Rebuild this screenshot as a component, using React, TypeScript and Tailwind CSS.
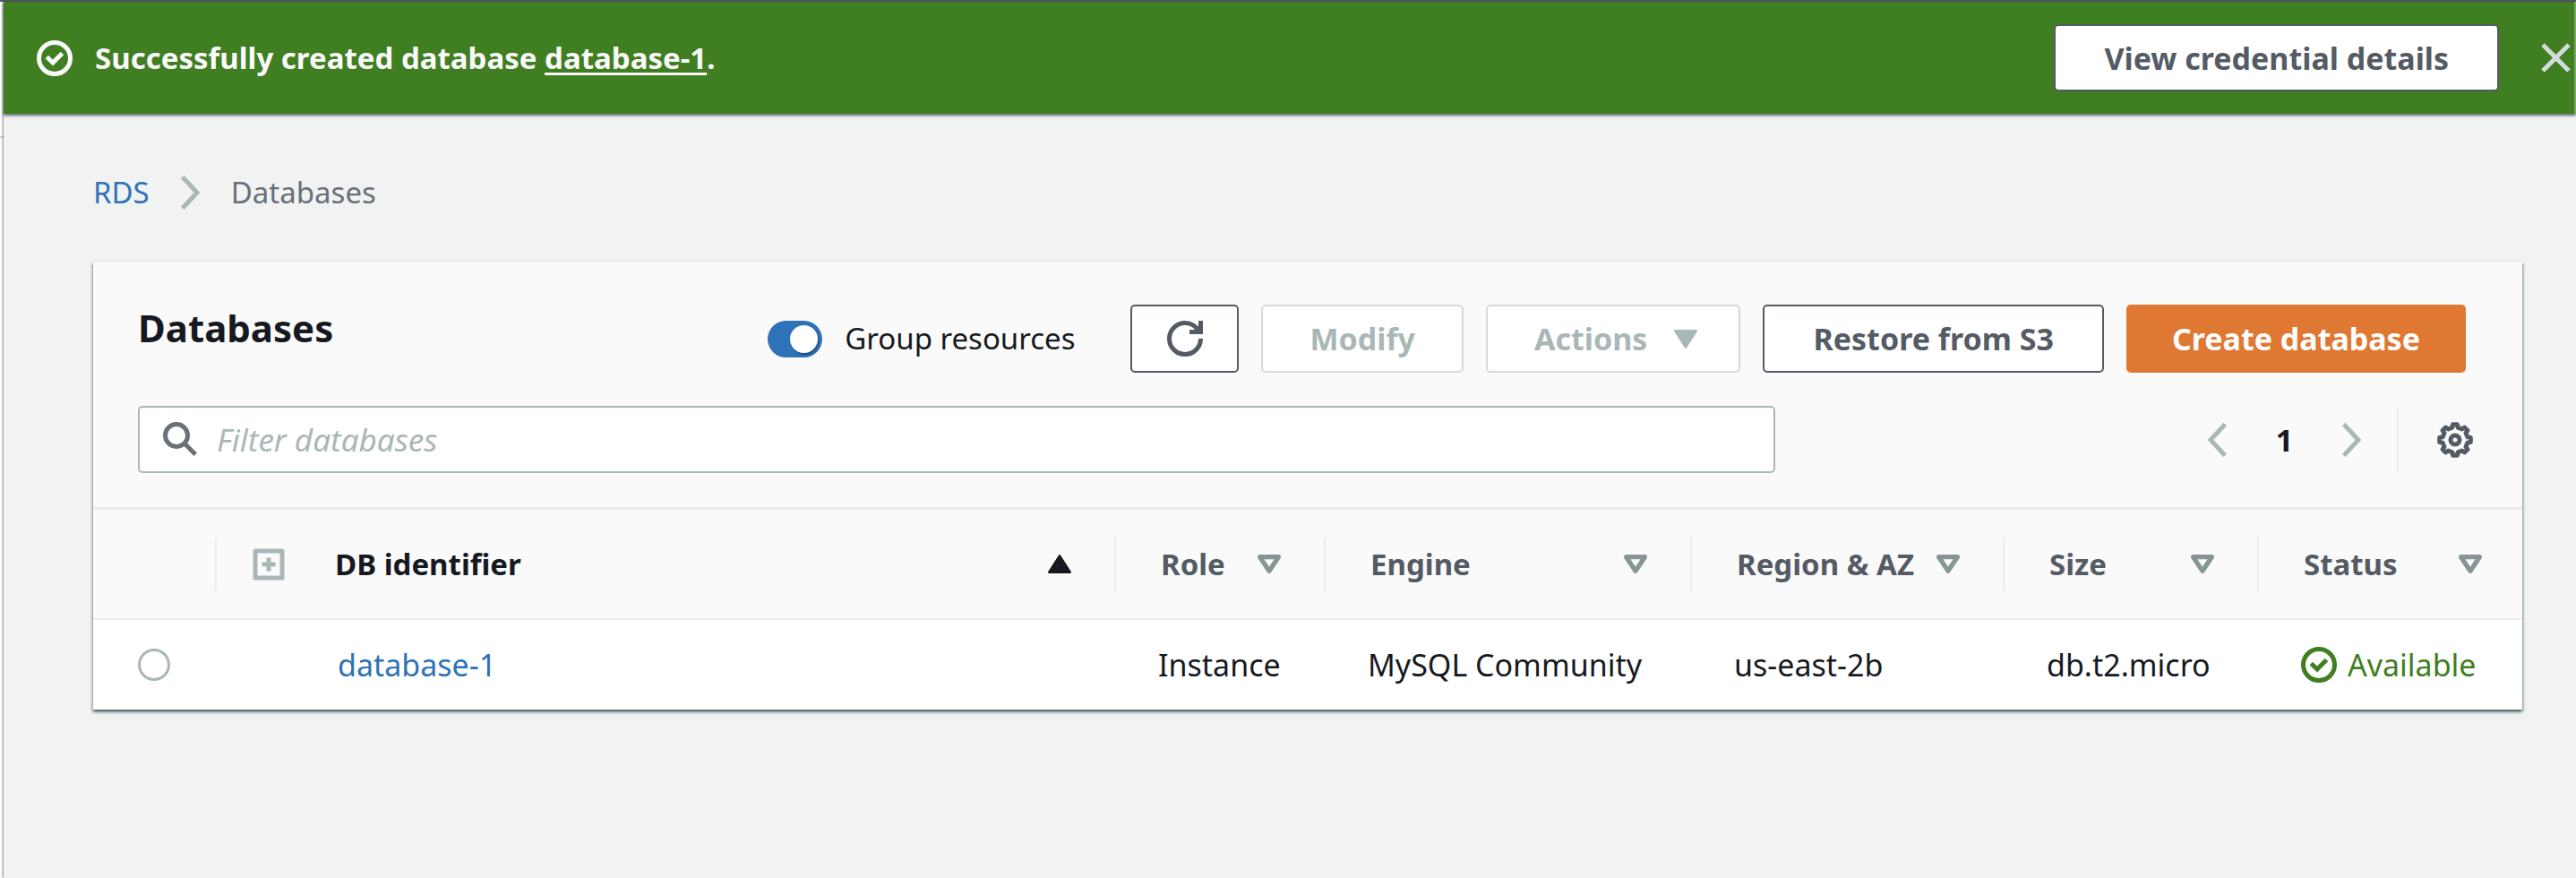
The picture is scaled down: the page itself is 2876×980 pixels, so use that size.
import React from "react";
import type { ReactNode } from "react";

function Icon({ children, className = "size-10" }: { children: ReactNode; className?: string }) {
  return (
    <svg viewBox="0 0 16 16" fill="none" stroke="currentColor" strokeWidth="2" aria-hidden="true" className={`shrink-0 ${className}`}>
      {children}
    </svg>
  );
}

function CheckCircle() {
  return (
    <Icon>
      <circle cx="8" cy="8" r="7" />
      <path d="M4.5 7.4l2.7 2.6 4.2-4.2" />
    </Icon>
  );
}

function Chevron({ left = false }: { left?: boolean }) {
  return (
    <svg viewBox="0 0 9 16" fill="none" stroke="currentColor" strokeWidth="2" aria-hidden="true" className="h-10 w-[23px] shrink-0">
      <path d={left ? "M8 1L1.5 8 8 15" : "M1 1l6.5 7L1 15"} />
    </svg>
  );
}

function Triangle({ variant }: { variant: "up" | "down" | "outline" }) {
  return (
    <svg
      viewBox="0 0 10 8"
      fill={variant === "outline" ? "none" : "currentColor"}
      stroke="currentColor"
      strokeWidth={variant === "outline" ? 2 : 1}
      strokeLinejoin="round"
      aria-hidden="true"
      className="h-[21px] w-[26px] shrink-0"
    >
      <path d={variant === "up" ? "M.5 7.5h9L5 .5z" : variant === "down" ? "M.5 .5h9L5 7.5z" : "M1 1h8L5 7z"} />
    </svg>
  );
}

function gearPath() {
  const points: string[] = [];
  for (let i = 0; i < 8; i++) {
    const a = (i * Math.PI) / 4;
    const next = a + Math.PI / 4;
    [
      [7, a - 0.14],
      [7, a + 0.14],
      [5.7, a + 0.22],
      [5.7, next - 0.22],
    ].forEach(([r, t]) => points.push(`${(8 + r * Math.cos(t)).toFixed(2)} ${(8 + r * Math.sin(t)).toFixed(2)}`));
  }
  return `M${points.join("L")}Z`;
}

const buttonBase = "flex items-center justify-center rounded-[5px] border-2 text-[34px] leading-[46px] font-bold whitespace-nowrap";
const normalButton = "border-[#545b64] bg-white text-[#545b64]";
const disabledButton = "border-[#d5dbdb] bg-white text-[#aab7b8]";

const columns = [
  { label: "Role", width: "w-[234px]" },
  { label: "Engine", width: "w-[409px]" },
  { label: "Region & AZ", width: "w-[349px]" },
  { label: "Size", width: "w-[284px]" },
  { label: "Status", width: "w-[294px]" },
];

function Banner() {
  return (
    <div role="status" className="relative flex items-center border-r-2 border-white/30 bg-[#407e22] py-[25px] pr-1 pl-[37px] text-[#fafafa] shadow-[0_2px_3px_rgba(0,10,30,0.6)]">
      <CheckCircle />
      <p className="ml-[25px] flex-1 text-[33px] leading-[46px] font-bold">
        Successfully created database{" "}
        <a href="#database-1" className="underline decoration-3 underline-offset-4">database-1</a>.
      </p>
      <button type="button" className={`${buttonBase} ${normalButton} h-[75px] px-[54px]`}>View credential details</button>
      <button type="button" aria-label="Dismiss" className="ml-[47px] text-[#d5dbdb]">
        <svg viewBox="0 0 33 33" fill="none" stroke="currentColor" strokeWidth="5" aria-hidden="true" className="size-[33px]">
          <path d="M2 2l29 29M31 2L2 31" />
        </svg>
      </button>
    </div>
  );
}

export default function App() {
  return (
    <div className="flex min-h-screen border-t-2 border-[#545b64] bg-[#f1f3f3] font-['Noto_Sans',sans-serif] text-[34px] leading-[46px] text-[#16191f]">
      <div className="w-1 shrink-0 bg-white pt-[150px]">
        <div className="h-0.5 bg-[#d5dbdb]" />
      </div>
      <div className="min-w-0 flex-1 shadow-[-1px_0_2px_rgba(0,28,36,0.5)]">
        <Banner />
        <main className="pt-16 pr-[60px] pb-16 pl-[100px]">
          <nav aria-label="Breadcrumb" className="mb-[53px] flex items-center gap-[34px] text-[33px] leading-[48px]">
            <a href="#rds" className="text-[#2e72b8]">RDS</a>
            <span className="text-[#aab7b8]"><Chevron /></span>
            <span className="text-[#687078]">Databases</span>
          </nav>

          <section className="bg-[#fafafa] shadow-[0_-2px_0_#eaeded,0_3px_3px_rgba(0,28,36,0.5),2px_2px_2px_rgba(0,28,36,0.15),-2px_2px_2px_rgba(0,28,36,0.15)]">
            <div className="flex items-start pt-12 pr-[63px] pl-[50px]">
              <h1 className="text-[42px] leading-[52px] font-bold">Databases</h1>
              <div className="ml-auto flex items-center gap-[25px]">
                <label className="mr-[37px] flex items-center gap-[25px] text-[33px]">
                  <input
                    type="checkbox"
                    defaultChecked
                    className="flex h-[41px] w-[61px] appearance-none items-center rounded-full bg-[#879596] px-[5px] before:block before:size-[31px] before:rounded-full before:bg-white before:shadow-[1px_2px_2px_rgba(0,0,0,0.35)] checked:justify-end checked:bg-[#2e72b8]"
                  />
                  Group resources
                </label>
                <button type="button" aria-label="Refresh" className={`${buttonBase} ${normalButton} h-[76px] w-[121px]`}>
                  <Icon>
                    <path d="M10 5h5V0" />
                    <path d="M15 8a7 7 0 1 1-7-7 6.9 6.9 0 0 1 6.3 4" />
                  </Icon>
                </button>
                <button type="button" disabled className={`${buttonBase} ${disabledButton} h-[76px] px-[52px]`}>Modify</button>
                <button type="button" disabled className={`${buttonBase} ${disabledButton} h-[76px] gap-[30px] pr-[46px] pl-[52px]`}>
                  Actions
                  <Triangle variant="down" />
                </button>
                <button type="button" className={`${buttonBase} ${normalButton} h-[76px] px-[54px]`}>Restore from S3</button>
                <button type="button" className={`${buttonBase} h-[76px] border-[#df7832] bg-[#df7832] px-[49px] text-white`}>Create database</button>
              </div>
            </div>

            <div className="mt-[37px] grid grid-cols-[1828fr_779fr] border-b-3 border-[#eaeded] pr-[55px] pb-[38px] pl-[50px]">
              <label className="flex h-[75px] items-center gap-5 rounded-[5px] border-2 border-[#aab7b8] bg-white px-[26px]">
                <span className="text-[#687078]">
                  <Icon>
                    <circle cx="6" cy="6" r="5" />
                    <path d="M9.5 9.5l5 5" />
                  </Icon>
                </span>
                <input
                  type="text"
                  aria-label="Filter databases"
                  placeholder="Filter databases"
                  className="min-w-0 flex-1 bg-transparent text-[35px] outline-none placeholder:text-[#aab7b8] placeholder:italic"
                />
              </label>
              <div className="flex items-center justify-end text-[#aab7b8]">
                <button type="button" aria-label="Previous page"><Chevron left /></button>
                <button type="button" className="mx-[46px] w-[35px] text-center font-bold text-[#16191f]">1</button>
                <button type="button" aria-label="Next page"><Chevron /></button>
                <div className="ml-[39px] h-[75px] border-l-2 border-[#eaeded]" />
                <button type="button" aria-label="Preferences" className="ml-[43px] text-[#545b64]">
                  <Icon>
                    <path d={gearPath()} strokeLinejoin="round" />
                    <circle cx="8" cy="8" r="2" />
                  </Icon>
                </button>
              </div>
            </div>

            <table className="w-full table-fixed border-collapse text-left whitespace-nowrap">
              <thead className="border-b-2 border-[#eaeded] text-[33px] text-[#545b64]">
                <tr className="h-[122px]">
                  <th scope="col" aria-label="Selection" className="w-[138px] p-0">
                    <div className="h-[60px] border-r-2 border-[#eaeded]" />
                  </th>
                  <th scope="col" className="p-0 text-[#16191f]">
                    <div className="flex h-[60px] items-center border-r-2 border-[#eaeded] pr-12 pl-10">
                      <button type="button" aria-label="Expand all" className="text-[#aab7b8]">
                        <svg viewBox="0 0 36 36" fill="none" stroke="currentColor" strokeWidth="5" strokeLinejoin="round" aria-hidden="true" className="size-9">
                          <path d="M3 3h30v30H3zM10.500 18h15M18 10.500v15" />
                        </svg>
                      </button>
                      <button type="button" className="ml-14 flex flex-1 items-center justify-between">
                        DB identifier
                        <Triangle variant="up" />
                      </button>
                    </div>
                  </th>
                  {columns.map((column) => (
                    <th key={column.label} scope="col" className={`group p-0 ${column.width}`}>
                      <div className="flex h-[60px] items-center border-r-2 border-[#eaeded] pr-12 pl-[50px] group-last:border-r-0 group-last:pr-[45px]">
                        <button type="button" className="flex flex-1 items-center justify-between">
                          {column.label}
                          <span className="text-[#879596]"><Triangle variant="outline" /></span>
                        </button>
                      </div>
                    </th>
                  ))}
                </tr>
              </thead>
              <tbody className="bg-white">
                <tr className="h-[101px]">
                  <td className="p-0 pl-[50px]">
                    <input type="radio" name="database" aria-label="Select database-1" className="block size-9 appearance-none rounded-full border-3 border-[#aab7b8] bg-white checked:border-12 checked:border-[#2e72b8]" />
                  </td>
                  <td className="p-0 pl-[135px]"><a href="#database-1" className="text-[#2e72b8]">database-1</a></td>
                  <td className="p-0 pl-[47px]">Instance</td>
                  <td className="p-0 pl-[47px]">MySQL Community</td>
                  <td className="p-0 pl-[47px]">us-east-2b</td>
                  <td className="p-0 pl-[47px]">db.t2.micro</td>
                  <td className="p-0 pl-[47px]">
                    <span className="flex items-center gap-3 text-[#407e22]">
                      <CheckCircle />
                      Available
                    </span>
                  </td>
                </tr>
              </tbody>
            </table>
          </section>
        </main>
      </div>
    </div>
  );
}
